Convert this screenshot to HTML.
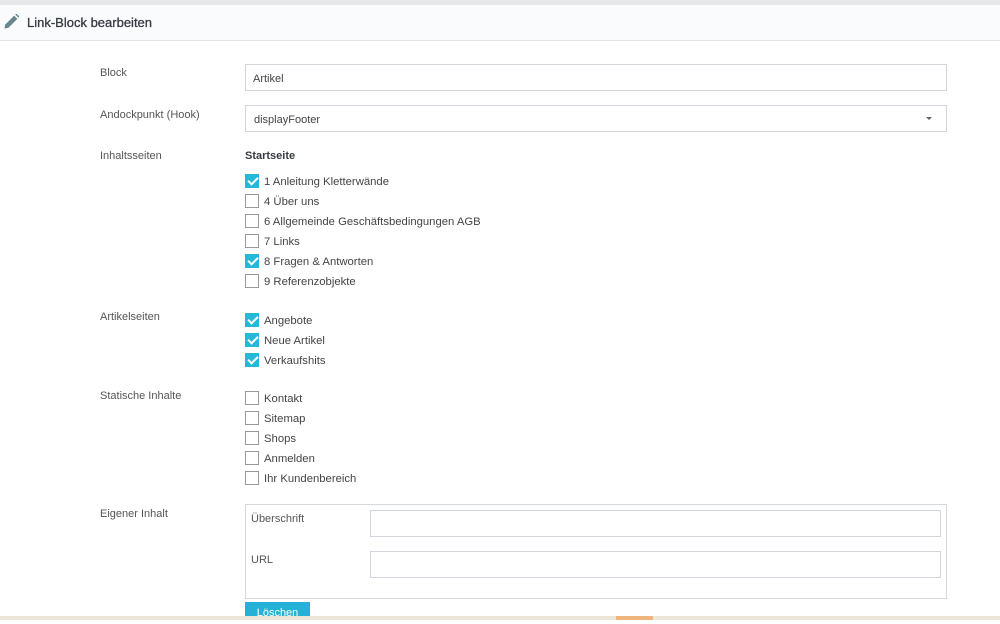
<!DOCTYPE html><html><head><meta charset="utf-8"><style>
body{margin:0;width:1000px;height:620px;overflow:hidden;background:#fff;font-family:"Liberation Sans",sans-serif;font-size:11px;color:#555;position:relative}
.a{position:absolute}
.inp{position:absolute;border:1px solid #cfd5da;background:#fff;box-sizing:border-box}
.lbl{position:absolute;left:100px;color:#555;margin-top:1px}
.cb{position:absolute;left:245px;width:14px;height:14px;border:1px solid #999;box-sizing:border-box;background:#fff}
.cb.on{background:#25b9d7;border-color:#25b9d7}
.cb.on:after{content:"";position:absolute;left:4px;top:0px;width:4px;height:8px;border:solid #fff;border-width:0 2px 2px 0;transform:rotate(45deg)}
.ct{position:absolute;left:264px;color:#444;margin-top:1px;font-size:11.3px}
</style></head><body>
<div class="a" style="left:0;top:0;width:1000px;height:5px;background:#e6e8ea"></div>
<div class="a" style="left:0;top:5px;width:1000px;height:35px;background:#fafbfc;border-bottom:1px solid #e3e6e9"></div>
<svg class="a" style="left:4px;top:14px" width="15" height="15" viewBox="0 0 14 14"><path d="M0.5 13.5 L1 10 L9.5 1.5 L12.5 4.5 L4 13 Z" fill="#6c868e"/><path d="M10.5 0.5 L11.5 -0.5 L14.5 2.5 L13.5 3.5Z" fill="#6c868e"/></svg>
<div class="a" style="left:27px;top:15px;font-size:13px;color:#363a41;-webkit-text-stroke:0.3px #363a41">Link-Block bearbeiten</div>

<div class="lbl" style="top:66px">Block</div>
<div class="inp" style="left:245px;top:64px;width:702px;height:27px"><span class="a" style="left:7px;top:8px;color:#444">Artikel</span></div>
<div class="lbl" style="top:108px">Andockpunkt (Hook)</div>
<div class="inp" style="left:245px;top:105px;width:702px;height:27px"><span class="a" style="left:8px;top:8px;color:#444">displayFooter</span><span class="a" style="right:14px;top:11px;border:3px solid transparent;border-top:3px solid #666"></span></div>
<div class="lbl" style="top:149px">Inhaltsseiten</div>
<div class="a" style="left:245px;top:150px;font-weight:bold;color:#363a41">Startseite</div>

<div class="cb on" style="top:174px"></div><div class="ct" style="top:175px">1 Anleitung Kletterwände</div>
<div class="cb" style="top:194px"></div><div class="ct" style="top:195px">4 Über uns</div>
<div class="cb" style="top:214px"></div><div class="ct" style="top:215px">6 Allgemeinde Geschäftsbedingungen AGB</div>
<div class="cb" style="top:234px"></div><div class="ct" style="top:235px">7 Links</div>
<div class="cb on" style="top:254px"></div><div class="ct" style="top:255px">8 Fragen &amp; Antworten</div>
<div class="cb" style="top:274px"></div><div class="ct" style="top:275px">9 Referenzobjekte</div>

<div class="lbl" style="top:310px">Artikelseiten</div>
<div class="cb on" style="top:313px"></div><div class="ct" style="top:314px">Angebote</div>
<div class="cb on" style="top:333px"></div><div class="ct" style="top:334px">Neue Artikel</div>
<div class="cb on" style="top:353px"></div><div class="ct" style="top:354px">Verkaufshits</div>

<div class="lbl" style="top:389px">Statische Inhalte</div>
<div class="cb" style="top:391px"></div><div class="ct" style="top:392px">Kontakt</div>
<div class="cb" style="top:411px"></div><div class="ct" style="top:412px">Sitemap</div>
<div class="cb" style="top:431px"></div><div class="ct" style="top:432px">Shops</div>
<div class="cb" style="top:451px"></div><div class="ct" style="top:452px">Anmelden</div>
<div class="cb" style="top:471px"></div><div class="ct" style="top:472px">Ihr Kundenbereich</div>

<div class="lbl" style="top:507px">Eigener Inhalt</div>
<div class="inp" style="left:245px;top:504px;width:702px;height:95px;border-color:#d5d9dc"></div>
<div class="a" style="left:251px;top:513px;color:#555">Überschrift</div>
<div class="inp" style="left:370px;top:510px;width:571px;height:27px"></div>
<div class="a" style="left:251px;top:554px;color:#555">URL</div>
<div class="inp" style="left:370px;top:551px;width:571px;height:27px"></div>
<div class="a" style="left:245px;top:602px;width:65px;height:18px;background:#25b1d5;color:#fff;text-align:center;line-height:22px;font-size:11px">Löschen</div>
<div class="a" style="left:0;top:616px;width:1000px;height:4px;background:#ece6d8"></div>
<div class="a" style="left:616px;top:616px;width:37px;height:4px;background:#f0b47f"></div>
</body></html>
